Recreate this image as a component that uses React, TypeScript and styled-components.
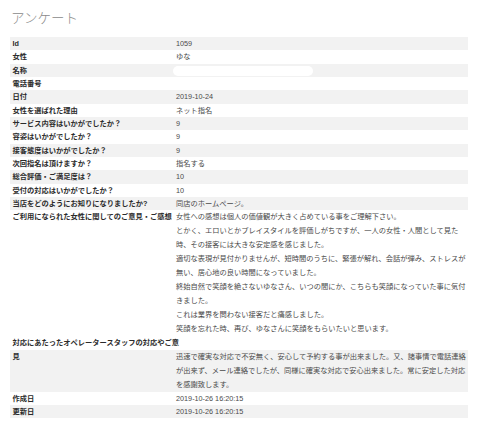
import styled, { createGlobalStyle } from 'styled-components';

const GlobalStyle = createGlobalStyle`
  html, body {
    margin: 0;
    padding: 0;
    background: #fff;
  }
  body {
    font-family: "Liberation Sans", "Noto Sans CJK JP", sans-serif;
  }
`;

const Page = styled.div`
  width: 480px;
  height: 425px;
  padding: 0 10px;
  box-sizing: border-box;
  overflow: hidden;
`;

const Title = styled.h2`
  margin: 11px 0 12.5px 1px;
  font-family: "Noto Sans CJK JP", sans-serif;
  font-size: 13.5px;
  line-height: 13.5px;
  font-weight: 300;
  color: #8a8a8a;
`;

const Table = styled.div`
  width: 458px;
  display: flex;
  flex-direction: column;
`;

const Row = styled.div<{ $shade?: boolean }>`
  display: grid;
  grid-template-columns: 166px 292px;
  background: ${(p) => (p.$shade ? '#f2f2f2' : 'transparent')};
  font-size: 7.25px;
  line-height: 13.33px;
`;

const Label = styled.div<{ $span?: boolean }>`
  padding-left: 2.5px;
  font-weight: 700;
  color: #2b2b2b;
  grid-column: ${(p) => (p.$span ? '1 / -1' : 'auto')};
`;

const Value = styled.div<{ $multi?: boolean }>`
  color: #4a4a4a;
  line-height: ${(p) => (p.$multi ? '14px' : 'inherit')};
`;

const Redacted = styled.span`
  display: inline-block;
  width: 140px;
  height: 10px;
  margin-left: -3px;
  vertical-align: middle;
  background: #fff;
  border-radius: 5px;
  filter: blur(0.5px);
`;

type Item = {
  label: string;
  value?: string | string[];
  redacted?: boolean;
};

const items: Item[] = [
  { label: 'Id', value: '1059' },
  { label: '女性', value: 'ゆな' },
  { label: '名称', redacted: true },
  { label: '電話番号', value: '' },
  { label: '日付', value: '2019-10-24' },
  { label: '女性を選ばれた理由', value: 'ネット指名' },
  { label: 'サービス内容はいかがでしたか？', value: '9' },
  { label: '容姿はいかがでしたか？', value: '9' },
  { label: '接客態度はいかがでしたか？', value: '9' },
  { label: '次回指名は頂けますか？', value: '指名する' },
  { label: '総合評価・ご満足度は？', value: '10' },
  { label: '受付の対応はいかがでしたか？', value: '10' },
  { label: '当店をどのようにお知りになりましたか?', value: '同店のホームページ。' },
  {
    label: 'ご利用になられた女性に関してのご意見・ご感想',
    value: [
      '女性への感想は個人の価値観が大きく占めている事をご理解下さい。',
      'とかく、エロいとかプレイスタイルを評価しがちですが、一人の女性・人間として見た時、その接客には大きな安定感を感じました。',
      '適切な表現が見付かりませんが、短時間のうちに、緊張が解れ、会話が弾み、ストレスが無い、居心地の良い時間になっていました。',
      '終始自然で笑顔を絶さないゆなさん、いつの間にか、こちらも笑顔になっていた事に気付きました。',
      'これは業界を問わない接客だと痛感しました。',
      '笑顔を忘れた時、再び、ゆなさんに笑顔をもらいたいと思います。',
    ],
  },
];

const staffComment =
  '迅速で確実な対応で不安無く、安心して予約する事が出来ました。又、諸事情で電話連絡が出来ず、メール連絡でしたが、同様に確実な対応で安心出来ました。常に安定した対応を感謝致します。';

export default function App() {
  return (
    <Page>
      <GlobalStyle />
      <Title>アンケート</Title>
      <Table>
        {items.map((item, i) => (
          <Row key={item.label} $shade={i % 2 === 0}>
            <Label>{item.label}</Label>
            {Array.isArray(item.value) ? (
              <Value $multi>
                {item.value.map((line) => (
                  <div key={line}>{line}</div>
                ))}
              </Value>
            ) : (
              <Value>{item.redacted ? <Redacted /> : item.value}</Value>
            )}
          </Row>
        ))}
        <Row>
          <Label $span>対応にあたったオペレータースタッフの対応やご意</Label>
        </Row>
        <Row $shade>
          <Label>見</Label>
          <Value $multi>{staffComment}</Value>
        </Row>
        <Row>
          <Label>作成日</Label>
          <Value>2019-10-26 16:20:15</Value>
        </Row>
        <Row $shade>
          <Label>更新日</Label>
          <Value>2019-10-26 16:20:15</Value>
        </Row>
      </Table>
    </Page>
  );
}
